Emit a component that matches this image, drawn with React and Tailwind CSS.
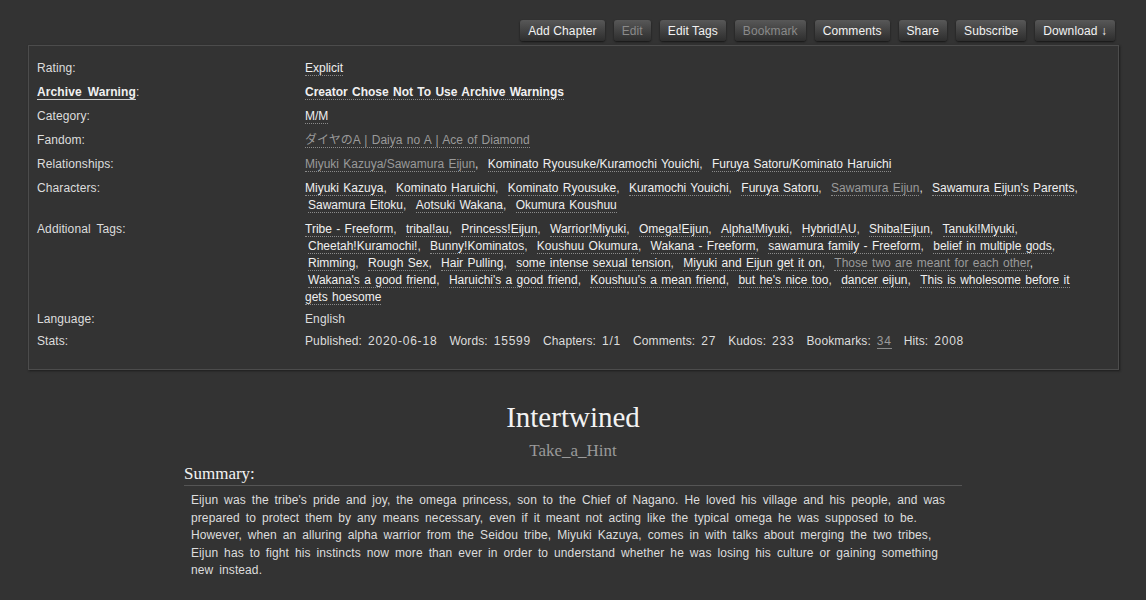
import React from 'react';

const actions = [
    { label: 'Add Chapter' },
    { label: 'Edit', muted: true },
    { label: 'Edit Tags' },
    { label: 'Bookmark', muted: true },
    { label: 'Comments' },
    { label: 'Share' },
    { label: 'Subscribe' },
    { label: 'Download ↓' },
];

const meta = [
    { label: 'Rating:', tags: [{ t: 'Explicit' }] },
    { label: 'Archive Warning', labelLink: true, tags: [{ t: 'Creator Chose Not To Use Archive Warnings', bold: true }] },
    { label: 'Category:', tags: [{ t: 'M/M' }] },
    { label: 'Fandom:', tags: [{ t: 'ダイヤのA | Daiya no A | Ace of Diamond', seen: true }] },
    {
        label: 'Relationships:',
        tags: [
            { t: 'Miyuki Kazuya/Sawamura Eijun', seen: true },
            { t: 'Kominato Ryousuke/Kuramochi Youichi' },
            { t: 'Furuya Satoru/Kominato Haruichi' },
        ],
    },
    {
        label: 'Characters:',
        tags: [
            { t: 'Miyuki Kazuya' },
            { t: 'Kominato Haruichi' },
            { t: 'Kominato Ryousuke' },
            { t: 'Kuramochi Youichi' },
            { t: 'Furuya Satoru' },
            { t: 'Sawamura Eijun', seen: true },
            { t: "Sawamura Eijun's Parents" },
            { t: 'Sawamura Eitoku' },
            { t: 'Aotsuki Wakana' },
            { t: 'Okumura Koushuu' },
        ],
    },
    {
        label: 'Additional Tags:',
        tight: true,
        tags: [
            { t: 'Tribe - Freeform' },
            { t: 'tribal!au' },
            { t: 'Princess!Eijun' },
            { t: 'Warrior!Miyuki' },
            { t: 'Omega!Eijun' },
            { t: 'Alpha!Miyuki' },
            { t: 'Hybrid!AU' },
            { t: 'Shiba!Eijun' },
            { t: 'Tanuki!Miyuki' },
            { t: 'Cheetah!Kuramochi!' },
            { t: 'Bunny!Kominatos' },
            { t: 'Koushuu Okumura' },
            { t: 'Wakana - Freeform' },
            { t: 'sawamura family - Freeform' },
            { t: 'belief in multiple gods' },
            { t: 'Rimming' },
            { t: 'Rough Sex' },
            { t: 'Hair Pulling' },
            { t: 'some intense sexual tension' },
            { t: 'Miyuki and Eijun get it on' },
            { t: 'Those two are meant for each other', seen: true },
            { t: "Wakana's a good friend" },
            { t: "Haruichi's a good friend" },
            { t: "Koushuu's a mean friend" },
            { t: "but he's nice too" },
            { t: 'dancer eijun' },
            { t: 'This is wholesome before it gets hoesome' },
        ],
    },
];

const stats = [
    ['Published:', '2020-06-18'],
    ['Words:', '15599'],
    ['Chapters:', '1/1'],
    ['Comments:', '27'],
    ['Kudos:', '233'],
    ['Bookmarks:', '34', true],
    ['Hits:', '2008'],
];

const TagList = ({ tags }) => (
    <span>
        {tags.map((tag, i) => (
            <span key={i} className={i === 0 ? '' : 'pl-[3px]'}>
                <a
                    className={`border-b border-dotted border-[#8a8a8a] ${tag.seen ? 'text-[#9a9a9a]' : 'text-[#f0f0f0]'} ${tag.bold ? 'font-bold' : ''}`}
                >
                    {tag.t}
                </a>
                {i < tags.length - 1 && <span className="mr-[2px]">,</span>}
                {i < tags.length - 1 && ' '}
            </span>
        ))}
    </span>
);

export default function App() {
    return (
        <div
            className="min-h-[600px] bg-[#333333] text-[12px] leading-[17px] text-[#dddddd] tracking-[0.1px] [word-spacing:2.5px]"
            style={{ fontFamily: '"Liberation Sans", "Noto Sans CJK JP", sans-serif' }}
        >
            <ul className="flex justify-end gap-[9px] pt-[20px] pr-[31px] [word-spacing:normal]">
                {actions.map((a) => (
                    <li key={a.label}>
                        <a
                            className={`block h-[21px] px-[8px] leading-[22px] rounded-[3px] bg-linear-to-b from-[#585858] to-[#2e2e2e] shadow-[0_1px_2px_#151515] ${a.muted ? 'text-[#8a8a8a]' : 'text-[#f2f2f2]'}`}
                        >
                            {a.label}
                        </a>
                    </li>
                ))}
            </ul>

            <dl className="mt-[4px] ml-[28px] mr-[27px] border border-[#4c4c4c] shadow-[1px_1px_2px_#1c1c1c] pl-[8px] pr-[33px] pt-[14px] pb-[19px]">
                {meta.map((row) => (
                    <div key={row.label} className={`flex ${row.tight ? 'mb-[5px]' : 'mb-[7px]'}`}>
                        <dt className="w-[268px] shrink-0">
                            {row.labelLink ? (
                                <>
                                    <a className="font-bold text-[#f0f0f0] border-b border-[#cfcfcf]">{row.label}</a>:
                                </>
                            ) : (
                                row.label
                            )}
                        </dt>
                        <dd className="flex-1 tracking-normal [word-spacing:1px]">
                            <TagList tags={row.tags} />
                        </dd>
                    </div>
                ))}
                <div className="flex mb-[5px]">
                    <dt className="w-[268px] shrink-0">Language:</dt>
                    <dd className="flex-1">English</dd>
                </div>
                <div className="flex">
                    <dt className="w-[268px] shrink-0">Stats:</dt>
                    <dd className="flex-1">
                        {stats.map(([k, v, link]) => (
                            <span key={k} className="mr-[12px]">
                                {k}{' '}
                                <span className="tracking-[0.8px]">
                                    {link ? (
                                        <a className="text-[#9a9a9a] border-b border-[#8a8a8a]">{v}</a>
                                    ) : (
                                        v
                                    )}
                                </span>
                            </span>
                        ))}
                    </dd>
                </div>
            </dl>

            <div className="mt-[30px] text-center [word-spacing:normal]" style={{ fontFamily: '"Liberation Serif", serif' }}>
                <h2 className="text-[29px] leading-[34px] text-[#f2f2f2] tracking-normal">Intertwined</h2>
                <h3 className="mt-[7px] text-[17px] leading-[20px] text-[#9a9a9a] tracking-normal">Take_a_Hint</h3>
            </div>

            <div className="mx-auto w-[778px] mt-[3px]">
                <h3
                    className="text-[17px] leading-[20px] text-[#f2f2f2] tracking-normal [word-spacing:normal] border-b border-[#555555] pb-[1px]"
                    style={{ fontFamily: '"Liberation Serif", serif' }}
                >
                    Summary:
                </h3>
                <p className="mt-[6px] pl-[7px] pr-[10px] leading-[17.5px]">
                    Eijun was the tribe's pride and joy, the omega princess, son to the Chief of Nagano. He loved his village and his people, and was prepared to protect them by any means necessary, even if it meant not acting like the typical omega he was supposed to be. However, when an alluring alpha warrior from the Seidou tribe, Miyuki Kazuya, comes in with talks about merging the two tribes, Eijun has to fight his instincts now more than ever in order to understand whether he was losing his culture or gaining something new instead.
                </p>
            </div>
        </div>
    );
}
